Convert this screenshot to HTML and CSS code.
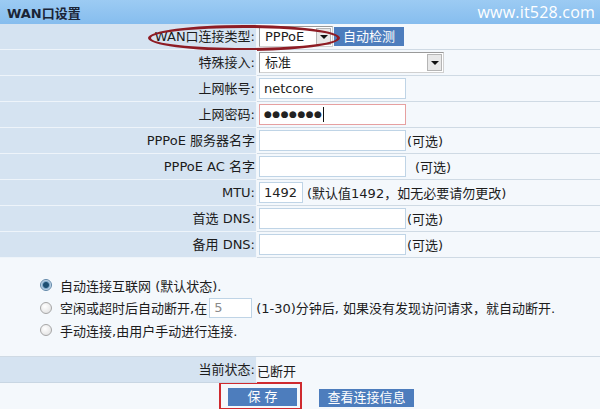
FILE: index.html
```html
<!DOCTYPE html>
<html lang="zh-CN">
<head>
  <meta charset="UTF-8">
  <title>WAN口设置</title>
  <link rel="stylesheet" href="styles.css">
</head>
<body>
  <div class="panel">
    <div class="panel-head">
      <span class="panel-title">WAN口设置</span>
      <span class="site">www.it528.com</span>
    </div>

    <div class="row">
      <div class="label">WAN口连接类型:</div>
      <div class="field">
        <span class="select select-type">PPPoE<span class="arrow"></span></span>
        <span class="btn btn-detect">自动检测</span>
      </div>
      <span class="mark-ellipse"></span>
    </div>
    <div class="row">
      <div class="label">特殊接入:</div>
      <div class="field">
        <span class="select select-wide">标准<span class="arrow"></span></span>
      </div>
    </div>
    <div class="row">
      <div class="label">上网帐号:</div>
      <div class="field"><span class="input">netcore</span></div>
    </div>
    <div class="row">
      <div class="label">上网密码:</div>
      <div class="field"><span class="input input-pass">&#9679;&#9679;&#9679;&#9679;&#9679;&#9679;&#9679;<span class="caret"></span></span></div>
    </div>
    <div class="row">
      <div class="label">PPPoE 服务器名字</div>
      <div class="field"><span class="input"></span><span class="hint">(可选)</span></div>
    </div>
    <div class="row">
      <div class="label">PPPoE AC 名字</div>
      <div class="field"><span class="input"></span><span class="hint hint-gap">(可选)</span></div>
    </div>
    <div class="row">
      <div class="label">MTU:</div>
      <div class="field"><span class="input input-mtu">1492</span><span class="hint hint-mtu">(默认值1492，如无必要请勿更改)</span></div>
    </div>
    <div class="row">
      <div class="label">首选 DNS:</div>
      <div class="field"><span class="input"></span><span class="hint">(可选)</span></div>
    </div>
    <div class="row">
      <div class="label">备用 DNS:</div>
      <div class="field"><span class="input"></span><span class="hint">(可选)</span></div>
    </div>

    <div class="modes">
      <div class="mode"><span class="radio checked"></span>自动连接互联网 (默认状态).</div>
      <div class="mode"><span class="radio"></span>空闲或超时后自动断开,在 <span class="input input-idle">5</span> (1-30)分钟后, 如果没有发现访问请求，就自动断开.</div>
      <div class="mode"><span class="radio"></span>手动连接,由用户手动进行连接.</div>
    </div>

    <div class="row row-status">
      <div class="label">当前状态:</div>
      <div class="field">已断开</div>
    </div>

    <div class="actions">
      <span class="mark-box"><span class="btn btn-save">保 存</span></span>
      <span class="btn btn-info">查看连接信息</span>
    </div>
  </div>
</body>
</html>
```

FILE: styles.css
```css
body {
  margin: 0;
  font-family: "DejaVu Sans", "Noto Sans CJK SC", sans-serif;
  font-size: 13px;
  color: #1c1c1c;
  background: #f4f8fc;
}
.panel {
  width: 600px;
  height: 409px;
  overflow: hidden;
  background: #f4f8fc;
}
.panel-head {
  height: 24px;
  background: linear-gradient(#9ccbf3, #86bdee);
  display: flex;
  align-items: center;
  justify-content: space-between;
  padding: 0 5px 0 7px;
}
.panel-title {
  font-weight: bold;
  color: #1a2436;
}
.site {
  font-family: "Open Sans", "DejaVu Sans", sans-serif;
  font-size: 16px;
  color: #fff;
  letter-spacing: 0.2px;
}
.row {
  position: relative;
  display: grid;
  grid-template-columns: 257px 1fr;
  height: 26px;
}
.label {
  background: #d5e3f1;
  border-bottom: 1px solid #eef4fa;
  border-right: 1px solid #f2f6fa;
  text-align: right;
  line-height: 25px;
  padding-right: 1px;
}
.field {
  display: flex;
  align-items: center;
  padding-left: 2px;
  border-bottom: 1px solid #cfdae4;
}
.select {
  position: relative;
  height: 19px;
  line-height: 19px;
  background: #fff;
  border: 1px solid #9a9a9a;
  border-right-color: #d0d0d0;
  border-bottom-color: #d0d0d0;
  padding-left: 5px;
  box-sizing: content-box;
}
.select-type {
  width: 67px;
}
.select-wide {
  width: 178px;
}
.arrow {
  position: absolute;
  right: 1px;
  top: 1px;
  width: 15px;
  height: 17px;
  background: #e8e8e8;
  border: 1px solid #b5b5b5;
  box-sizing: border-box;
}
.arrow::after {
  content: "";
  position: absolute;
  left: 3px;
  top: 6px;
  border-left: 4px solid transparent;
  border-right: 4px solid transparent;
  border-top: 4px solid #111;
}
.btn {
  display: inline-block;
  background: #4d7dbd;
  color: #fff;
  height: 19px;
  line-height: 19px;
  text-align: center;
}
.btn-detect {
  width: 70px;
  margin-left: 1px;
}
.input {
  display: inline-block;
  width: 141px;
  height: 19px;
  line-height: 19px;
  padding-left: 4px;
  background: #fff;
  border: 1px solid #bfd4e6;
  color: #222;
}
.input-pass {
  border-color: #e6a0a0;
  font-size: 9px;
  letter-spacing: 0.5px;
}
.caret {
  display: inline-block;
  width: 1px;
  height: 15px;
  background: #111;
  vertical-align: middle;
  margin-left: 1px;
}
.input-mtu {
  width: 38px;
}
.hint {
  margin-left: 1px;
}
.hint-gap {
  margin-left: 9px;
}
.hint-mtu {
  margin-left: 4px;
}
.mark-ellipse {
  position: absolute;
  left: 148px;
  top: 1px;
  width: 186px;
  height: 20px;
  border: 3px solid #8e1c24;
  border-radius: 50%;
}
.modes {
  height: 74px;
  padding: 16px 0 8px 40px;
  border-bottom: 1px solid #cfdae4;
}
.mode {
  display: flex;
  align-items: center;
  height: 22.5px;
  white-space: nowrap;
}
.radio {
  width: 10px;
  height: 10px;
  border-radius: 50%;
  border: 1px solid #a6a6a6;
  background: radial-gradient(circle at 40% 35%, #fff, #dcdcdc);
  margin-right: 8px;
  flex-shrink: 0;
}
.radio.checked {
  border-color: #5e86a8;
  background: radial-gradient(circle, #1d4f72 0 2.5px, #7ea7c8 3.5px, #d8e6f2 5px);
}
.input-idle {
  width: 37px;
  height: 18px;
  line-height: 18px;
  color: #8a8a8a;
  margin: 0 4px 0 2px;
}
.row-status .field {
  padding-left: 0;
  border-bottom: none;
}
.row-status .label {
  border-bottom-color: #c8d6e3;
}
.actions {
  display: flex;
  align-items: center;
  padding-left: 219px;
  height: 26px;
}
.mark-box {
  display: inline-block;
  border: 2px solid #cf2a2f;
  padding: 4px 3px 0 7px;
  height: 20px;
  margin-top: -1px;
}
.btn-save {
  width: 69px;
  height: 18px;
  line-height: 18px;
}
.btn-info {
  width: 95px;
  height: 18px;
  line-height: 18px;
  margin-left: 17px;
  margin-top: 4px;
}
```
